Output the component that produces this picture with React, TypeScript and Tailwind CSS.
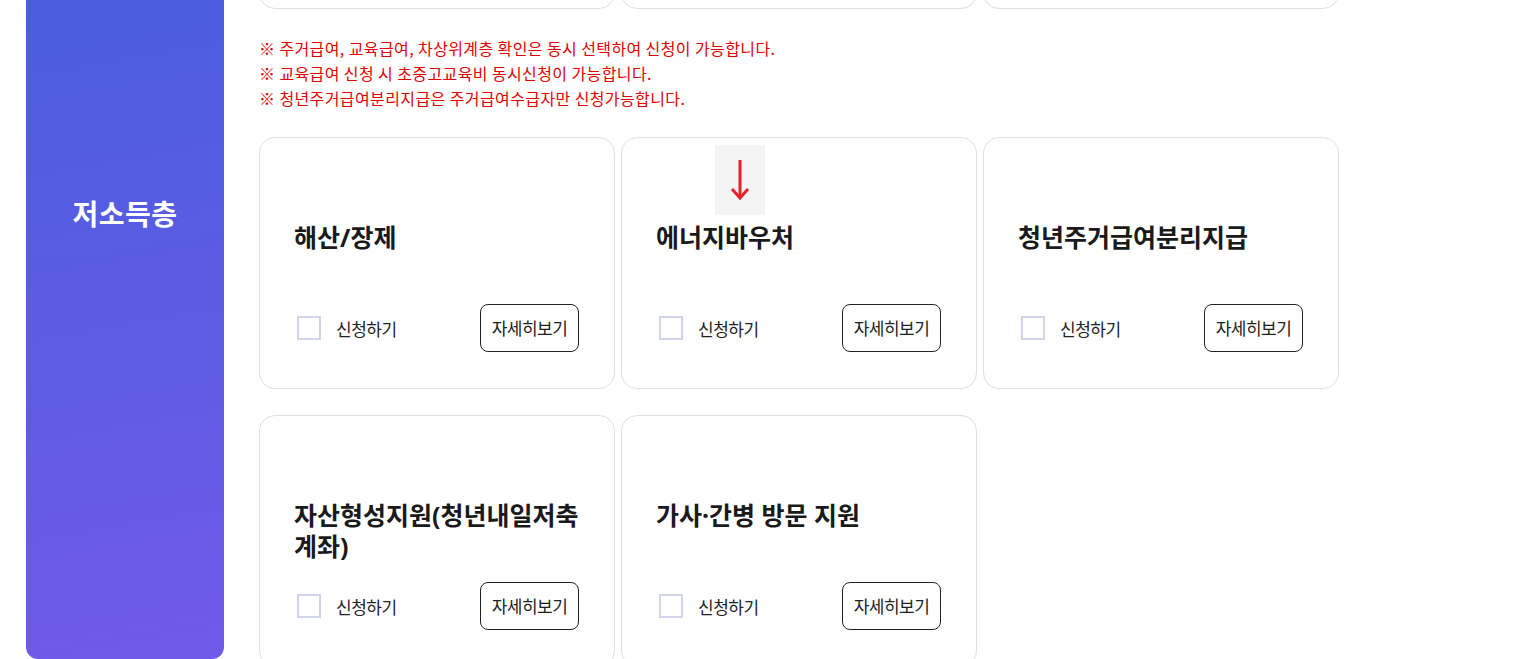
import { useState } from 'react'

type Benefit = {
  readonly title: string
  readonly marker?: boolean
}

const notices = [
  '※ 주거급여, 교육급여, 차상위계층 확인은 동시 선택하여 신청이 가능합니다.',
  '※ 교육급여 신청 시 초중고교육비 동시신청이 가능합니다.',
  '※ 청년주거급여분리지급은 주거급여수급자만 신청가능합니다.',
]

const benefits: Benefit[] = [
  { title: '해산/장제' },
  { title: '에너지바우처', marker: true },
  { title: '청년주거급여분리지급' },
  { title: '자산형성지원(청년내일저축 계좌)' },
  { title: '가사·간병 방문 지원' },
]

const font = "font-['Noto_Sans_CJK_KR','Noto_Sans',sans-serif]"

/** Red "scroll down" hint that sits over the energy voucher card. */
function DownMarker() {
  return (
    <div className="absolute left-[93px] top-[7px] flex h-[70px] w-[50px] items-center justify-center bg-[#f4f4f4]">
      <svg width="20" height="44" viewBox="0 0 20 44" fill="none">
        <path d="M10 2 V40" stroke="#e8202a" strokeWidth="3" />
        <path d="M2 31 L10 40 L18 31" stroke="#e8202a" strokeWidth="3" strokeLinejoin="miter" />
      </svg>
    </div>
  )
}

function BenefitCard({ benefit }: { benefit: Benefit }) {
  const [checked, setChecked] = useState(false)
  return (
    <div className="relative flex h-[252px] flex-col rounded-[16px] border border-[#e0e0e0] bg-white pb-[36px] pl-[34px] pr-[35px] pt-[84px]">
      {benefit.marker && <DownMarker />}
      <h3 className="font-['Noto_Sans','Noto_Sans_CJK_KR',sans-serif] text-[25px] font-bold leading-[31px] text-[#1a1a1a]">
        {benefit.title}
      </h3>
      <div className="mt-auto flex h-[48px] items-center justify-between">
        <label className="ml-[3px] flex cursor-pointer items-center gap-[15px]">
          <span
            onClick={() => setChecked((c) => !c)}
            className="flex h-[24px] w-[24px] items-center justify-center border-2 border-[#d1d6ee] bg-white"
          >
            {checked && <span className="h-[12px] w-[12px] bg-[#5b5ce4]" />}
          </span>
          <span className="text-[17px] leading-none tracking-[-0.5px] text-[#222]">신청하기</span>
        </label>
        <button
          type="button"
          className="h-[48px] w-[99px] rounded-[8px] border border-[#222] bg-white text-[17px] tracking-[-0.5px] text-[#222]"
        >
          자세히보기
        </button>
      </div>
    </div>
  )
}

export default function App() {
  return (
    <div className={`${font} flex min-h-screen items-start gap-[35px] bg-white pl-[26px]`}>
      <aside className="h-[659px] w-[198px] shrink-0 rounded-b-[12px] bg-[linear-gradient(170deg,#4a5ddf_0%,#5d5ce3_50%,#705ae9_100%)] pt-[195px] text-center">
        <h2 className="text-[28px] font-bold leading-[36px] tracking-[0.5px] text-white">저소득층</h2>
      </aside>

      <main className="flex w-[1080px] flex-col">
        {/* bottom edge of the previous row of cards */}
        <div className="flex h-[9px] items-end gap-[6px] overflow-hidden">
          {[0, 1, 2].map((i) => (
            <div
              key={i}
              className="h-[252px] w-[356px] shrink-0 rounded-[16px] border border-[#e0e0e0] bg-white"
            />
          ))}
        </div>

        <ul className="mt-[27px] text-[16px] leading-[25px] tracking-[0.4px] text-[#e50000]">
          {notices.map((n) => (
            <li key={n}>{n}</li>
          ))}
        </ul>

        <div className="mt-[26px] grid grid-cols-[repeat(3,356px)] gap-x-[6px] gap-y-[26px]">
          {benefits.map((b) => (
            <BenefitCard key={b.title} benefit={b} />
          ))}
        </div>
      </main>
    </div>
  )
}
